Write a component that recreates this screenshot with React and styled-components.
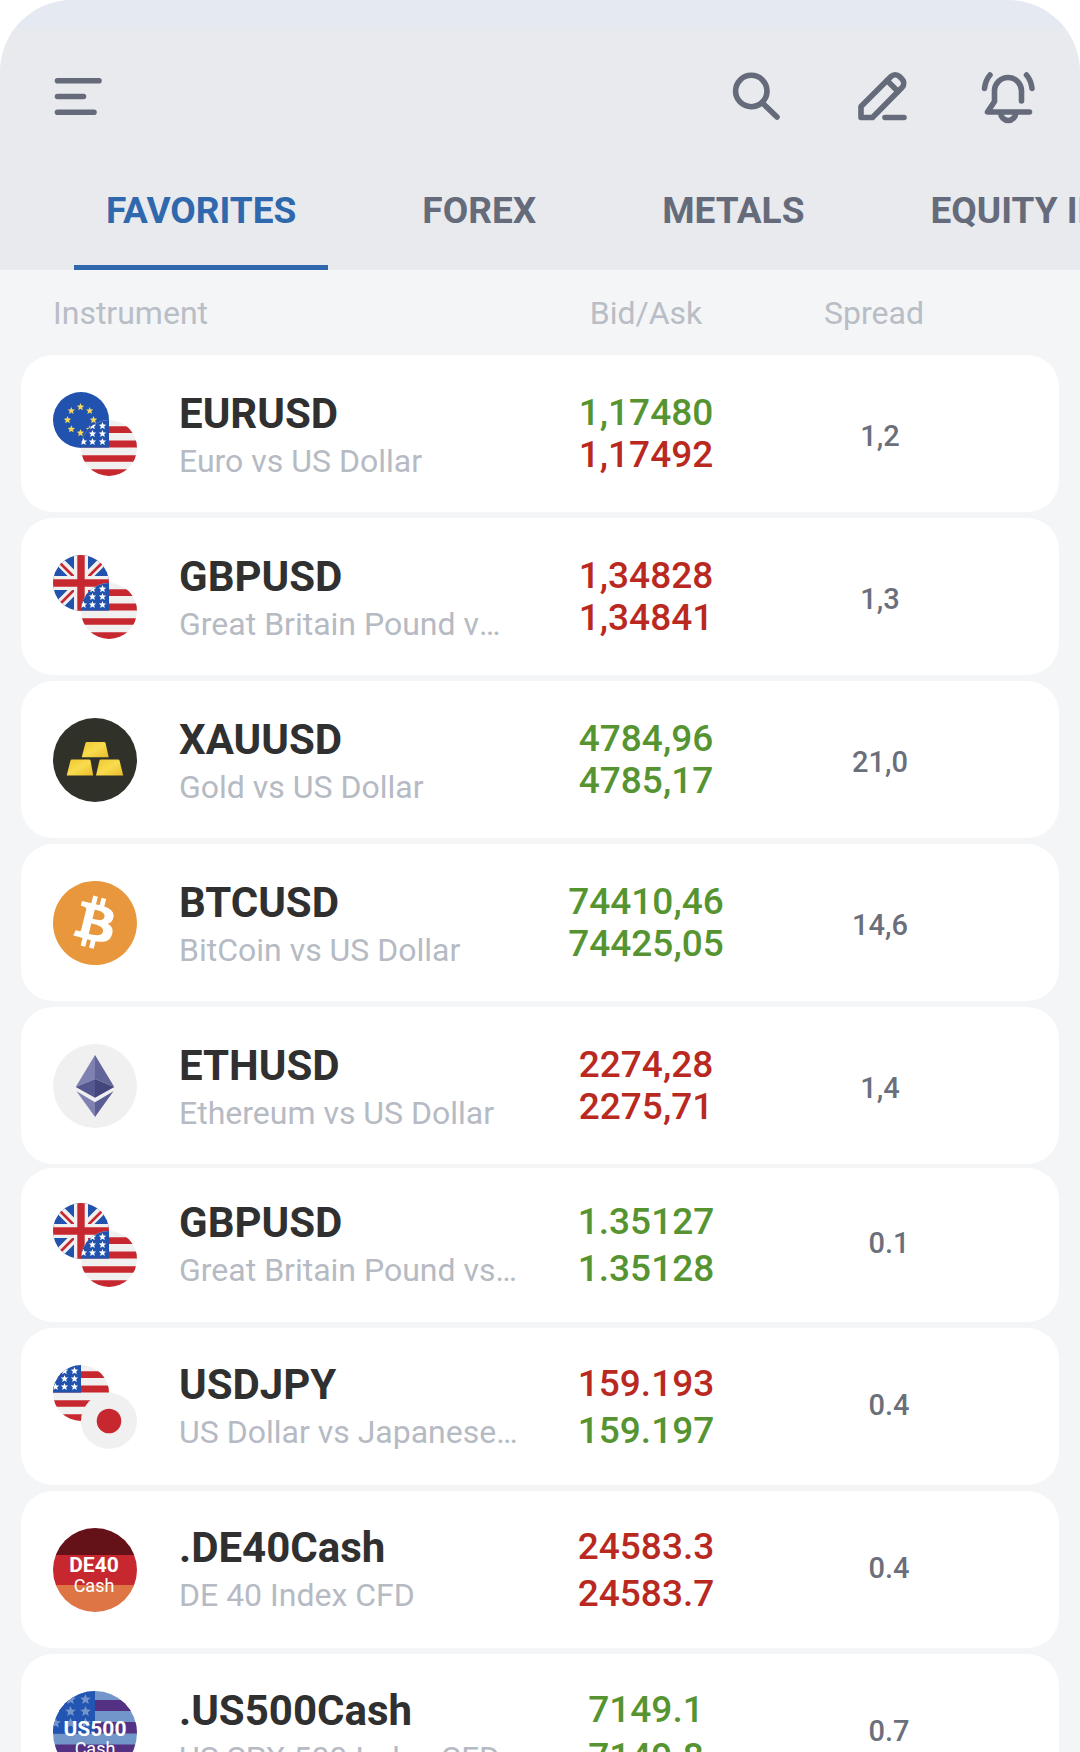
import React, { useState } from 'react';
import styled, { createGlobalStyle, css } from 'styled-components';
import { SiBitcoin } from 'react-icons/si';

const GlobalStyle = createGlobalStyle`
  *, *::before, *::after {
    box-sizing: border-box;
  }

  body {
    margin: 0;
    background: #fff;
    font-family: Roboto, 'Liberation Sans', sans-serif;
  }
`;

const Screen = styled.div`
  display: flex;
  flex-direction: column;
  height: 100vh;
  overflow: hidden;
  background: #f3f5f7;
  border-radius: 72px 72px 0 0;
`;

const Header = styled.header`
  flex: none;
  padding-top: 70px;
  background: linear-gradient(#e5e9f2 0, #e5e9f2 24px, #e8eaed 32px);
`;

const Toolbar = styled.div`
  display: flex;
  align-items: center;
  justify-content: space-between;
  padding: 0 44px 0 50px;
`;

const Actions = styled.div`
  display: flex;
  gap: 70px;
`;

const IconButton = styled.button`
  display: block;
  width: 56px;
  height: 56px;
  padding: 0;
  border: 0;
  background: none;
  color: #656b7a;
  cursor: pointer;

  svg {
    display: block;
    fill: none;
    stroke: currentColor;
    stroke-width: 5.6;
    stroke-linecap: round;
    stroke-linejoin: round;
  }
`;

const Tabs = styled.nav`
  display: flex;
  gap: 62px;
  margin-top: 30px;
  padding-left: 74px;
  overflow: hidden;
`;

const Tab = styled.button`
  flex: none;
  height: 114px;
  padding: 0 32px;
  border: 0;
  border-bottom: 5px solid ${({ $active }) => ($active ? '#2f68ac' : 'transparent')};
  background: none;
  color: ${({ $active }) => ($active ? '#2f68ac' : '#656b7a')};
  font: 700 37px Roboto, 'Liberation Sans', sans-serif;
  white-space: nowrap;
  cursor: pointer;
`;

const Scroller = styled.main`
  flex: 1;
  min-height: 0;
  overflow-y: auto;
  scrollbar-width: none;
`;

const Table = styled.table`
  display: block;
  padding: 0 21px;
`;

const rowGrid = css`
  display: grid;
  grid-template-columns: 84px minmax(0, 1fr) 280px 188px;
  align-items: center;
  padding: 0 85px 0 32px;
`;

const Head = styled.thead`
  display: block;
`;

const HeadRow = styled.tr`
  ${rowGrid}
  height: 85px;
`;

const HeadCell = styled.th`
  grid-column: span ${({ $span }) => $span || 1};
  padding: 0;
  color: #b9bdc5;
  font-size: 32px;
  font-weight: 400;
  text-align: ${({ $span }) => ($span ? 'left' : 'center')};

  &:last-child {
    padding-right: 12px;
  }
`;

const Group = styled.tbody`
  display: flex;
  flex-direction: column;
  gap: 6px;
  margin-bottom: 4px;
`;

const Row = styled.tr`
  ${rowGrid}
  height: ${({ $short }) => ($short ? 154 : 157)}px;
  border-radius: 32px;
  background: #fff;
`;

const IconCell = styled.td`
  padding: 0;

  > svg {
    display: block;
  }
`;

const NameCell = styled.th`
  min-width: 0;
  padding: ${({ $wide }) => ($wide ? 0 : 4)}px 0 0 42px;
  margin-right: ${({ $wide }) => ($wide ? '-12px' : '0')};
  text-align: left;
`;

const Symbol = styled.div`
  color: #303030;
  font-size: 42px;
  font-weight: 700;
  line-height: 50px;
`;

const Description = styled.div`
  overflow: hidden;
  color: #b6bac3;
  font-size: 32px;
  font-weight: 400;
  line-height: 44px;
  text-overflow: ellipsis;
  white-space: nowrap;
`;

const PriceCell = styled.td`
  padding: 0;
  font-size: 37px;
  font-weight: 500;
  line-height: ${({ $loose }) => ($loose ? 47 : 42)}px;
  text-align: center;
`;

const Price = styled.div`
  color: ${({ $up }) => ($up ? '#569431' : '#b9291f')};
`;

const SpreadCell = styled.td`
  padding: ${({ $shift }) => ($shift ? '0 0 4px 18px' : '4px 0 0')};
  color: #6b6f7c;
  font-size: 29px;
  font-weight: 500;
  text-align: center;
`;

const BadgeText = styled.text`
  fill: #fff;
  font-family: Roboto, 'Liberation Sans', sans-serif;
  font-size: ${({ $strong }) => ($strong ? 21 : 18)}px;
  font-weight: ${({ $strong }) => ($strong ? 700 : 400)};
  text-anchor: middle;
`;

const CoinDisc = styled.div`
  width: 84px;
  height: 84px;
  border-radius: 50%;
  background: radial-gradient(#fff 60%, transparent 61%);
  color: #e8973c;

  svg {
    display: block;
  }
`;

function Star({ x, y, r, fill }) {
  const points = Array.from({ length: 10 }, (_, i) => {
    const radius = i % 2 ? r * 0.45 : r;
    const angle = (Math.PI / 5) * i - Math.PI / 2;
    return `${(x + radius * Math.cos(angle)).toFixed(2)},${(y + radius * Math.sin(angle)).toFixed(2)}`;
  });
  return <polygon points={points.join(' ')} fill={fill} />;
}

// Flags are drawn in a 56x56 box and clipped to a circle by FlagPair.
function EuFlag() {
  return (
    <>
      <rect width="56" height="56" fill="#2152ad" />
      {Array.from({ length: 8 }, (_, i) => {
        const a = (Math.PI / 4) * i;
        return <Star key={i} x={27.5 + 13 * Math.sin(a)} y={28 - 13 * Math.cos(a)} r={3.9} fill="#f5d95c" />;
      })}
    </>
  );
}

function UkFlag() {
  return (
    <>
      <rect width="56" height="56" fill="#2152ad" />
      <path d="M4 4l48 48M52 4L4 52" stroke="#f1f0f0" strokeWidth="9" />
      <path d="M4 5l20 20M52 5L32 25M4 52l20-20M52 52L32 32" stroke="#c7282f" strokeWidth="2.6" />
      <path d="M28 0v56M0 28h56" stroke="#f1f0f0" strokeWidth="14" />
      <path d="M28 0v56M0 28h56" stroke="#c7282f" strokeWidth="7.4" />
    </>
  );
}

function UsFlag() {
  const stars = [[11.5, 6], [21.5, 6], [11.5, 13.8], [21.5, 13.8], [2.5, 21.8], [11.5, 21.8], [21.5, 21.8]];
  return (
    <>
      <rect width="56" height="56" fill="#f1f0f0" />
      <path d="M0 6.3h56v6.7H0zM0 20.6h56v7H0zM0 35.2h56v6.6H0zM0 49.2h56V56H0z" fill="#c7282f" />
      <rect width="28" height="27.6" fill="#2152ad" />
      {stars.map(([x, y]) => <Star key={`${x}-${y}`} x={x} y={y} r={3.9} fill="#fff" />)}
    </>
  );
}

function JpFlag() {
  return (
    <>
      <rect width="56" height="56" fill="#f1f0f0" />
      <circle cx="28" cy="28" r="12.3" fill="#c7282f" />
    </>
  );
}

function FlagPair({ back: Back, front: Front }) {
  return (
    <svg width="84" height="84" viewBox="0 0 84 84" aria-hidden="true">
      <clipPath id="flag"><circle cx="28" cy="28" r="28" /></clipPath>
      <g clipPath="url(#flag)"><Back /></g>
      <g transform="translate(28 28)">
        <g clipPath="url(#flag)"><Front /></g>
      </g>
    </svg>
  );
}

function GoldIcon() {
  return (
    <svg width="84" height="84" viewBox="0 0 84 84" aria-hidden="true">
      <linearGradient id="gold" x1="0" y1="0" x2="1" y2="1">
        <stop offset="0" stopColor="#f0c62e" />
        <stop offset="0.5" stopColor="#f8dc4e" />
        <stop offset="1" stopColor="#e9bb28" />
      </linearGradient>
      <circle cx="42" cy="42" r="42" fill="#30322a" />
      <g fill="url(#gold)">
        <path d="M34 24h17q1.300 0 1.600 1.200L55.700 39.300H28.700L32.400 25.200Q32.700 24 34 24z" />
        <path d="M19 41.500h17q1.300 0 1.600 1.200L40.200 57.500H13.700L17.400 42.700Q17.700 41.500 19 41.500z" />
        <path d="M48 41.500h17q1.300 0 1.600 1.200L70.200 57.500H43L46.400 42.700Q46.700 41.500 48 41.500z" />
      </g>
    </svg>
  );
}

function BitcoinIcon() {
  return (
    <CoinDisc>
      <SiBitcoin size={84} aria-hidden="true" />
    </CoinDisc>
  );
}

function EthereumIcon() {
  return (
    <svg width="84" height="84" viewBox="0 0 84 84" aria-hidden="true">
      <circle cx="42" cy="42" r="42" fill="#f0f0f0" />
      <path d="M42 11v24L22.700 43z" fill="#7f82b0" />
      <path d="M42 11v24l19.300 8z" fill="#62659a" />
      <path d="M42 35v18.700L22.700 43z" fill="#555890" />
      <path d="M42 35v18.700L61.300 43z" fill="#43457b" />
      <path d="M23.500 47.300L42 58.300V73z" fill="#7f82b0" />
      <path d="M60.500 47.300L42 58.300V73z" fill="#5b5e95" />
    </svg>
  );
}

function De40Icon() {
  return (
    <svg width="84" height="84" viewBox="0 0 84 84" aria-hidden="true">
      <clipPath id="de40"><circle cx="42" cy="42" r="42" /></clipPath>
      <g clipPath="url(#de40)">
        <rect width="84" height="27" fill="#641118" />
        <rect y="27" width="84" height="30" fill="#c7282f" />
        <rect y="57" width="84" height="27" fill="#dd7544" />
      </g>
      <BadgeText x="41" y="44" $strong>DE40</BadgeText>
      <BadgeText x="41" y="64">Cash</BadgeText>
    </svg>
  );
}

function Us500Icon() {
  const stars = [[17.5, 8.5], [32.5, 8.5], [17.5, 20.5], [32.5, 20.5], [2.5, 32], [17.5, 32], [32.5, 32]];
  return (
    <svg width="84" height="84" viewBox="0 0 84 84" aria-hidden="true">
      <clipPath id="us500"><circle cx="42" cy="42" r="42" /></clipPath>
      <g clipPath="url(#us500)">
        <rect width="84" height="84" fill="#7396ca" />
        <path d="M0 9h84v11H0zM0 31h84v11.500H0zM0 53.500h84v11H0zM0 75h84v9H0z" fill="#543182" />
        <rect width="42" height="42.500" fill="#2355b2" />
        {stars.map(([x, y]) => <Star key={`${x}-${y}`} x={x} y={y} r={5.6} fill="#7396ca" />)}
      </g>
      <BadgeText x="42" y="45" $strong>US500</BadgeText>
      <BadgeText x="42" y="64">Cash</BadgeText>
    </svg>
  );
}

const tabs = ['FAVORITES', 'FOREX', 'METALS', 'EQUITY INDICES'];

const groups = [
  {
    id: 'comma',
    items: [
      { symbol: 'EURUSD', name: 'Euro vs US Dollar', bid: ['1,17480', true], ask: ['1,17492', false], spread: '1,2', icon: <FlagPair back={EuFlag} front={UsFlag} /> },
      { symbol: 'GBPUSD', name: 'Great Britain Pound vs US Dollar', bid: ['1,34828', false], ask: ['1,34841', false], spread: '1,3', icon: <FlagPair back={UkFlag} front={UsFlag} /> },
      { symbol: 'XAUUSD', name: 'Gold vs US Dollar', bid: ['4784,96', true], ask: ['4785,17', true], spread: '21,0', icon: <GoldIcon /> },
      { symbol: 'BTCUSD', name: 'BitCoin vs US Dollar', bid: ['74410,46', true], ask: ['74425,05', true], spread: '14,6', icon: <BitcoinIcon /> },
      { symbol: 'ETHUSD', name: 'Ethereum vs US Dollar', bid: ['2274,28', false], ask: ['2275,71', false], spread: '1,4', icon: <EthereumIcon /> },
    ],
  },
  {
    id: 'point',
    loose: true,
    items: [
      { symbol: 'GBPUSD', name: 'Great Britain Pound vs US Dollar', bid: ['1.35127', true], ask: ['1.35128', true], spread: '0.1', icon: <FlagPair back={UkFlag} front={UsFlag} /> },
      { symbol: 'USDJPY', name: 'US Dollar vs Japanese Yen', bid: ['159.193', false], ask: ['159.197', true], spread: '0.4', icon: <FlagPair back={UsFlag} front={JpFlag} /> },
      { symbol: '.DE40Cash', name: 'DE 40 Index CFD', bid: ['24583.3', false], ask: ['24583.7', false], spread: '0.4', icon: <De40Icon /> },
      { symbol: '.US500Cash', name: 'US SPX 500 Index CFD', bid: ['7149.1', true], ask: ['7149.8', true], spread: '0.7', icon: <Us500Icon /> },
    ],
  },
];

function InstrumentRow({ item, loose, short }) {
  return (
    <Row $short={short}>
      <IconCell>{item.icon}</IconCell>
      <NameCell scope="row" $wide={loose}>
        <Symbol>{item.symbol}</Symbol>
        <Description>{item.name}</Description>
      </NameCell>
      <PriceCell $loose={loose}>
        <Price $up={item.bid[1]}>{item.bid[0]}</Price>
        <Price $up={item.ask[1]}>{item.ask[0]}</Price>
      </PriceCell>
      <SpreadCell $shift={loose}>{item.spread}</SpreadCell>
    </Row>
  );
}

export default function App() {
  const [active, setActive] = useState('FAVORITES');

  return (
    <>
      <GlobalStyle />
      <Screen>
        <Header>
          <Toolbar>
            <IconButton aria-label="Menu">
              <svg width="56" height="56" viewBox="0 0 56 56">
                <path d="M7.500 10.800h41.500M7.500 26.500h26M7.500 42.200h36.500" />
              </svg>
            </IconButton>
            <Actions>
              <IconButton aria-label="Search">
                <svg width="56" height="56" viewBox="0 0 56 56">
                  <circle cx="23.300" cy="21" r="15.700" />
                  <path d="M34.500 33L49 47" />
                </svg>
              </IconButton>
              <IconButton aria-label="Edit">
                <svg width="56" height="56" viewBox="0 0 56 56">
                  <path d="M7 47.500V36.500L37 6.500a6 6 0 0 1 8.500 0l2.500 2.500a6 6 0 0 1 0 8.500L18.500 47.500z" />
                  <path d="M33 10.500l11 11M31 47.500h19" />
                </svg>
              </IconButton>
              <IconButton aria-label="Notifications">
                <svg width="56" height="56" viewBox="0 0 56 56">
                  <path d="M41.500 31V21a13.500 13.500 0 0 0-27 0v10.500L7.500 42h42" />
                  <path d="M20.700 43a7.500 7.500 0 0 0 15 0M4.500 18.500Q5.500 10 10 5M52 18.500Q51 10 46.500 5" />
                </svg>
              </IconButton>
            </Actions>
          </Toolbar>
          <Tabs aria-label="Instrument groups">
            {tabs.map((tab) => (
              <Tab key={tab} $active={tab === active} onClick={() => setActive(tab)}>
                {tab}
              </Tab>
            ))}
          </Tabs>
        </Header>
        <Scroller>
          <Table>
            <Head>
              <HeadRow>
                <HeadCell $span={2}>Instrument</HeadCell>
                <HeadCell>Bid/Ask</HeadCell>
                <HeadCell>Spread</HeadCell>
              </HeadRow>
            </Head>
            {groups.map(({ id, loose, items }) => (
              <Group key={id}>
                {items.map((item, i) => (
                  <InstrumentRow key={item.symbol} item={item} loose={loose} short={loose && i === 0} />
                ))}
              </Group>
            ))}
          </Table>
        </Scroller>
      </Screen>
    </>
  );
}
